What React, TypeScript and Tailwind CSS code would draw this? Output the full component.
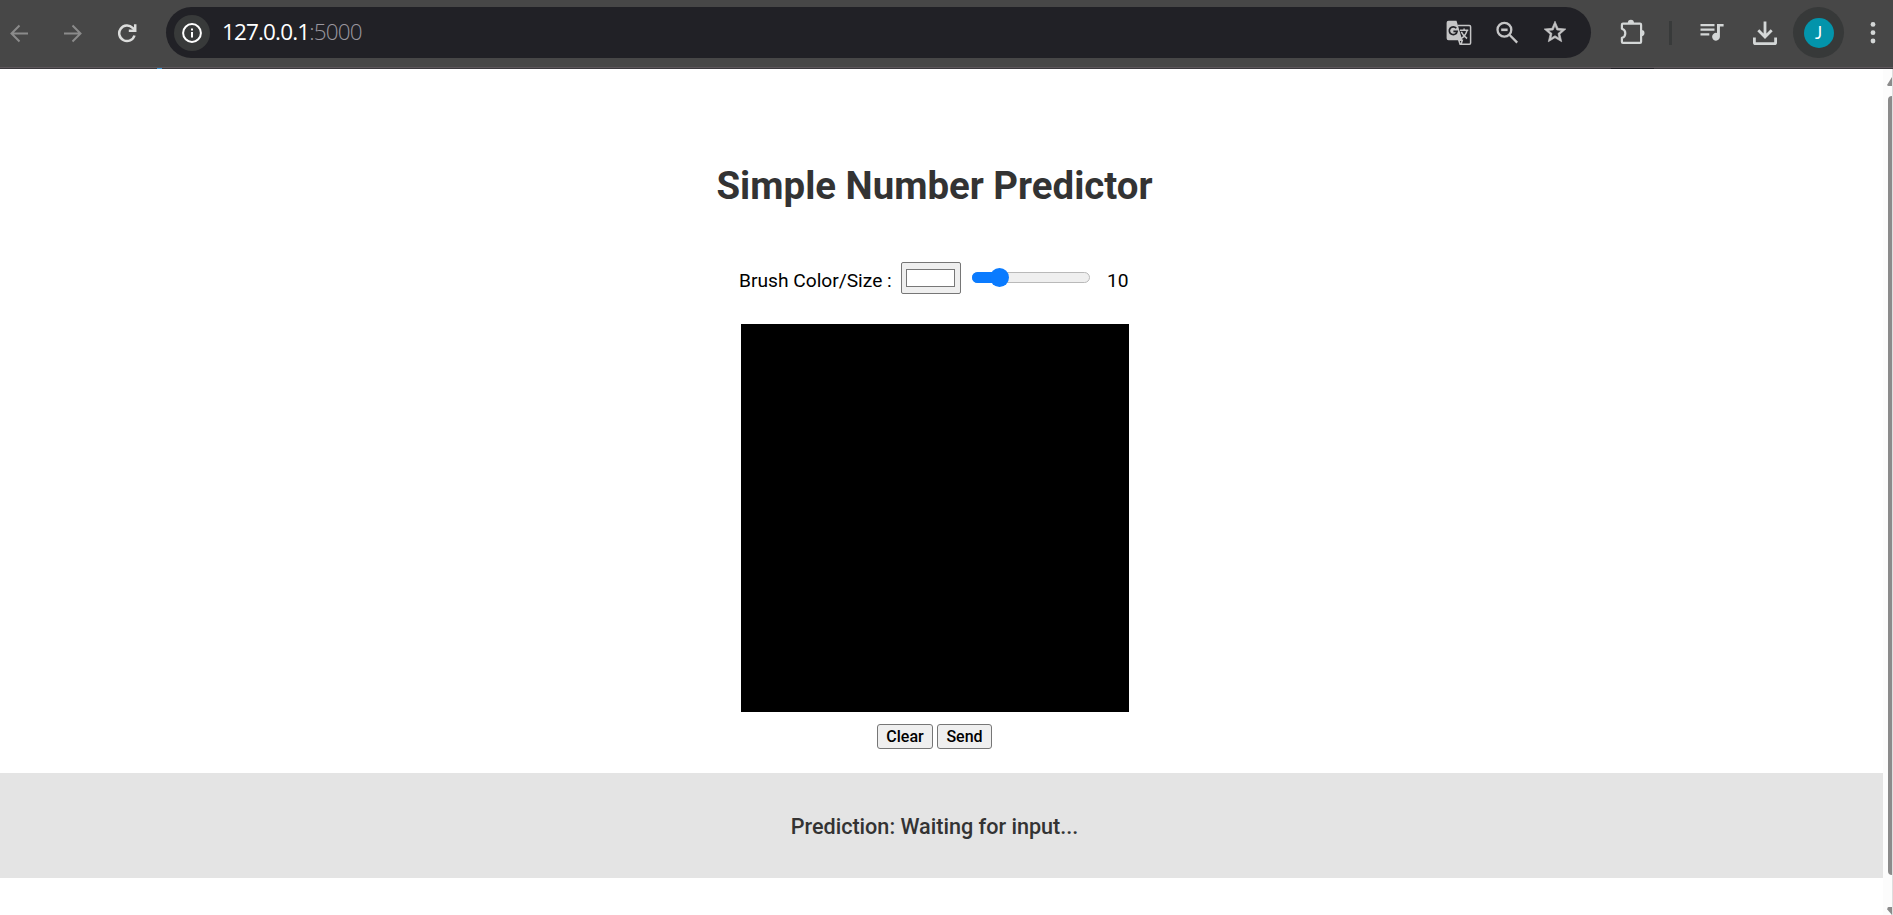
import React from "react";

function Toolbar() {
  return (
    <header className="flex h-[69px] w-full shrink-0 flex-col bg-[#474747]">
      <div className="flex h-[67px] items-start pt-[7px]">
        <div className="flex h-[51px] w-[166px] shrink-0 items-center">
          <svg className="ml-[9px] h-5 w-5" viewBox="0 0 20 20" fill="none" stroke="#8b8b8b" strokeWidth="2">
            <path d="M19 10.5H3M10.5 2.5l-8 8 8 8" />
          </svg>
          <svg className="ml-[34px] h-5 w-5" viewBox="0 0 20 20" fill="none" stroke="#8b8b8b" strokeWidth="2">
            <path d="M1 10.5h16M9.5 2.5l8 8-8 8" />
          </svg>
          <svg className="ml-[34px] h-5 w-5" viewBox="0 0 20 20" fill="none" stroke="#dcdddc" strokeWidth="2.5">
            <path d="M17.5 12.5A7.8 7.8 0 1 1 15.6 4.8L18 7.2" />
            <path d="M18.2 1.2V7.7H11.8" />
          </svg>
        </div>
        <div className="flex h-[51px] w-[1425px] shrink-0 items-center rounded-full bg-[#212126]">
          <div className="ml-2 flex h-9 w-9 items-center justify-center rounded-full bg-[#383a3a]">
            <svg className="h-5 w-5" viewBox="0 0 20 20">
              <circle cx="10" cy="10" r="8.9" fill="none" stroke="#fff" strokeWidth="2" />
              <path d="M9 9h2v5.5H9zM9 5.4h2v2H9z" fill="#fff" />
            </svg>
          </div>
          <span className="mb-[1px] ml-[12px] flex-1 whitespace-nowrap font-['Open_Sans','Noto_Sans',sans-serif] text-[22.5px] leading-none tracking-[-0.85px] text-white">
            127.0.0.1<span className="font-light text-[#9a979f]">:5000</span>
          </span>
          <svg className="mr-[23px] h-[26px] w-[26px]" viewBox="0 0 26 26">
            <path d="M2.5.8h8l5.8 19.4H2.5Q.6 20.2.6 18.3V2.7Q.6.8 2.5.8z" fill="#c5c5c6" />
            <path d="M12 5.5h11.4q1.2 0 1.2 1.2v16.4q0 1.2-1.2 1.2h-9.3l-1.3-4.1h3.5l-1.2 4" fill="none" stroke="#c5c5c6" strokeWidth="1.5" />
            <path d="M10.3 8.3A3.9 3.9 0 1 0 11.1 11.3H7.4" fill="none" stroke="#212126" strokeWidth="1.7" />
            <path d="M14 10.3h8.3M18.1 8.4v1.9M21 10.5q-1.2 5-6 8.2M15.3 11.9q2 4.2 5.8 6.6" fill="none" stroke="#c5c5c6" strokeWidth="1.5" />
          </svg>
          <svg className="mr-[23px] h-6 w-6" viewBox="0 0 24 24" fill="none" stroke="#c5c5c6" strokeWidth="2.3">
            <circle cx="9.4" cy="8.8" r="6.9" />
            <path d="M14.4 13.8l7.8 7.8" />
            <path d="M6.2 8.8h6.4" strokeWidth="2.6" />
          </svg>
          <svg className="mb-[1px] mr-[23px] h-[26px] w-[26px]" viewBox="0 0 24 24" fill="#c5c5c6" stroke="#c5c5c6" strokeWidth="0.6">
            <path d="M22 9.24l-7.19-.62L12 2 9.19 8.63 2 9.24l5.46 4.73L5.82 21 12 17.27 18.18 21l-1.63-7.03L22 9.24zM12 15.4l-3.76 2.27 1-4.28-3.32-2.88 4.38-.38L12 6.1l1.71 4.04 4.38.38-3.32 2.88 1 4.28L12 15.4z" />
          </svg>
        </div>
        <div className="flex h-[51px] flex-1 items-center">
          <svg className="mb-[2px] ml-[28px] h-[26px] w-[26px]" viewBox="0 0 26 26">
            <path d="M2.9 5.7q0-1.1 1.1-1.1h17q1.1 0 1.1 1.1v17q0 1.1-1.1 1.1H4q-1.1 0-1.1-1.1v-3.9q3.4-.9 3.4-4.6t-3.4-4.5z" fill="none" stroke="#d4d7d7" strokeWidth="2.2" strokeLinejoin="round" />
            <path d="M8.8 4.2a3.1 3.4 0 0 1 6.2 0zM22.5 11a3 3.1 0 0 1 0 6.2z" fill="#d4d7d7" />
          </svg>
          <div className="ml-[24px] h-6 w-[3px] bg-[#383a3a]" />
          <svg className="mb-[2px] ml-[28px] h-[18px] w-6" viewBox="0 0 24 18" fill="#d4d7d7">
            <path d="M.5 1h14v2.2H.5zM.5 5.6h14v2.2H.5zM.5 10.3h8.8v2.2H.5z" />
            <path d="M17 1h6.6v2.6h-3.7v10.1a3.9 3.9 0 1 1-2.9-3.7z" />
          </svg>
          <svg className="ml-[28px] h-[26px] w-[26px]" viewBox="0 0 26 26" fill="none" stroke="#d4d7d7" strokeWidth="2.8">
            <path d="M13 1.5v15M6.3 10.2l6.7 6.7 6.7-6.7" />
            <path d="M2.4 17.5v5q0 1.2 1.2 1.2h18.8q1.2 0 1.2-1.2v-5" />
          </svg>
          <div className="ml-[15px] flex h-[51px] w-[51px] items-center justify-center rounded-full bg-[#373939]">
            <div className="flex h-[30px] w-[30px] items-center justify-center rounded-full bg-[#0394ab] font-['Lato',sans-serif] text-[17px] leading-none text-white">
              J
            </div>
          </div>
          <svg className="ml-[26px] h-6 w-[6px]" viewBox="0 0 6 24" fill="#d4d7d7">
            <circle cx="3" cy="3.4" r="2.4" />
            <circle cx="3" cy="11.7" r="2.4" />
            <circle cx="3" cy="20" r="2.4" />
          </svg>
        </div>
      </div>
      <div className="h-px bg-[#5d575b]" />
      <div className="flex h-px bg-[#3b393d]">
        <div className="ml-[157px] h-px w-[5px] bg-[#3f94d0]" />
        <div className="ml-[1449px] h-px w-[43px] bg-[#212126]" />
      </div>
    </header>
  );
}

function BrushControls() {
  return (
    <div className="mt-[56px] flex h-8 w-[390px] items-start">
      <span className="mt-[5px] w-[162px] whitespace-nowrap text-[19.2px] leading-7 text-black">Brush Color/Size :</span>
      <div className="flex h-8 w-[60px] items-center justify-center rounded-[2px] border border-[#767676] bg-[#efefef]">
        <div className="mr-px h-[18px] w-[49px] border border-[#777] bg-white" />
      </div>
      <div className="relative ml-[11px] mt-[10px] h-[11px] w-[118px] rounded-full border border-[#b9b9b9] bg-[#efefef]">
        <div className="absolute -left-px -top-px h-[11px] w-7 rounded-l-full bg-[#0a7bff]" />
        <div className="absolute -top-[5px] left-[17px] h-[19px] w-[19px] rounded-full bg-[#0a7bff]" />
      </div>
      <span className="ml-[17px] mt-[5px] text-[19.2px] leading-7 text-black">10</span>
    </div>
  );
}

function ActionButton({ label, width }: { label: string; width: string }) {
  return (
    <button className={`${width} h-[25px] rounded-[3px] border border-[#767676] bg-[#efefef] pl-px text-center text-[16px] font-medium leading-[23px] text-black`}>
      {label}
    </button>
  );
}

function Scrollbar() {
  return (
    <div className="flex w-[9px] shrink-0 flex-col items-end justify-between overflow-hidden bg-[#fcfcfc]">
      <svg className="mt-[8px] h-[10px] w-[5px] shrink-0" viewBox="0 0 5 10">
        <path d="M5 0v9H1.5Q0 9 .3 7.5z" fill="#8b8b8b" />
      </svg>
      <div className="mb-[32px] mt-[9px] w-[4px] flex-1 rounded-l-[5px] bg-[#8b8b8b]" />
      <svg className="h-[8px] w-[5px] shrink-0" viewBox="0 0 5 8">
        <path d="M5 0v8L.3 2.5Q0 0 1.5 0z" fill="#8b8b8b" />
      </svg>
    </div>
  );
}

export default function App() {
  return (
    <div className="flex h-[915px] w-[1893px] flex-col overflow-hidden bg-white font-['Roboto',sans-serif]">
      <Toolbar />
      <div className="flex min-h-0 flex-1">
        <main className="flex flex-1 flex-col">
          <div className="flex h-[704px] w-[1868px] flex-col items-center">
            <h1 className="ml-px mt-[97px] h-10 whitespace-nowrap text-[38.4px] font-bold leading-10 text-[#333]">Simple Number Predictor</h1>
            <BrushControls />
            <div className="ml-[2px] mt-[30px] h-[388px] w-[388px] bg-black" />
            <div className="mt-3 flex gap-1">
              <ActionButton label="Clear" width="w-[56px]" />
              <ActionButton label="Send" width="w-[55px]" />
            </div>
          </div>
          <div className="flex h-[105px] items-center bg-[#e4e4e4]">
            <p className="mt-[4px] w-[1869px] text-center text-[21.6px] font-medium text-[#333]">Prediction: Waiting for input...</p>
          </div>
        </main>
        <Scrollbar />
        <div className="w-px shrink-0 bg-[#dedede]" />
      </div>
    </div>
  );
}
